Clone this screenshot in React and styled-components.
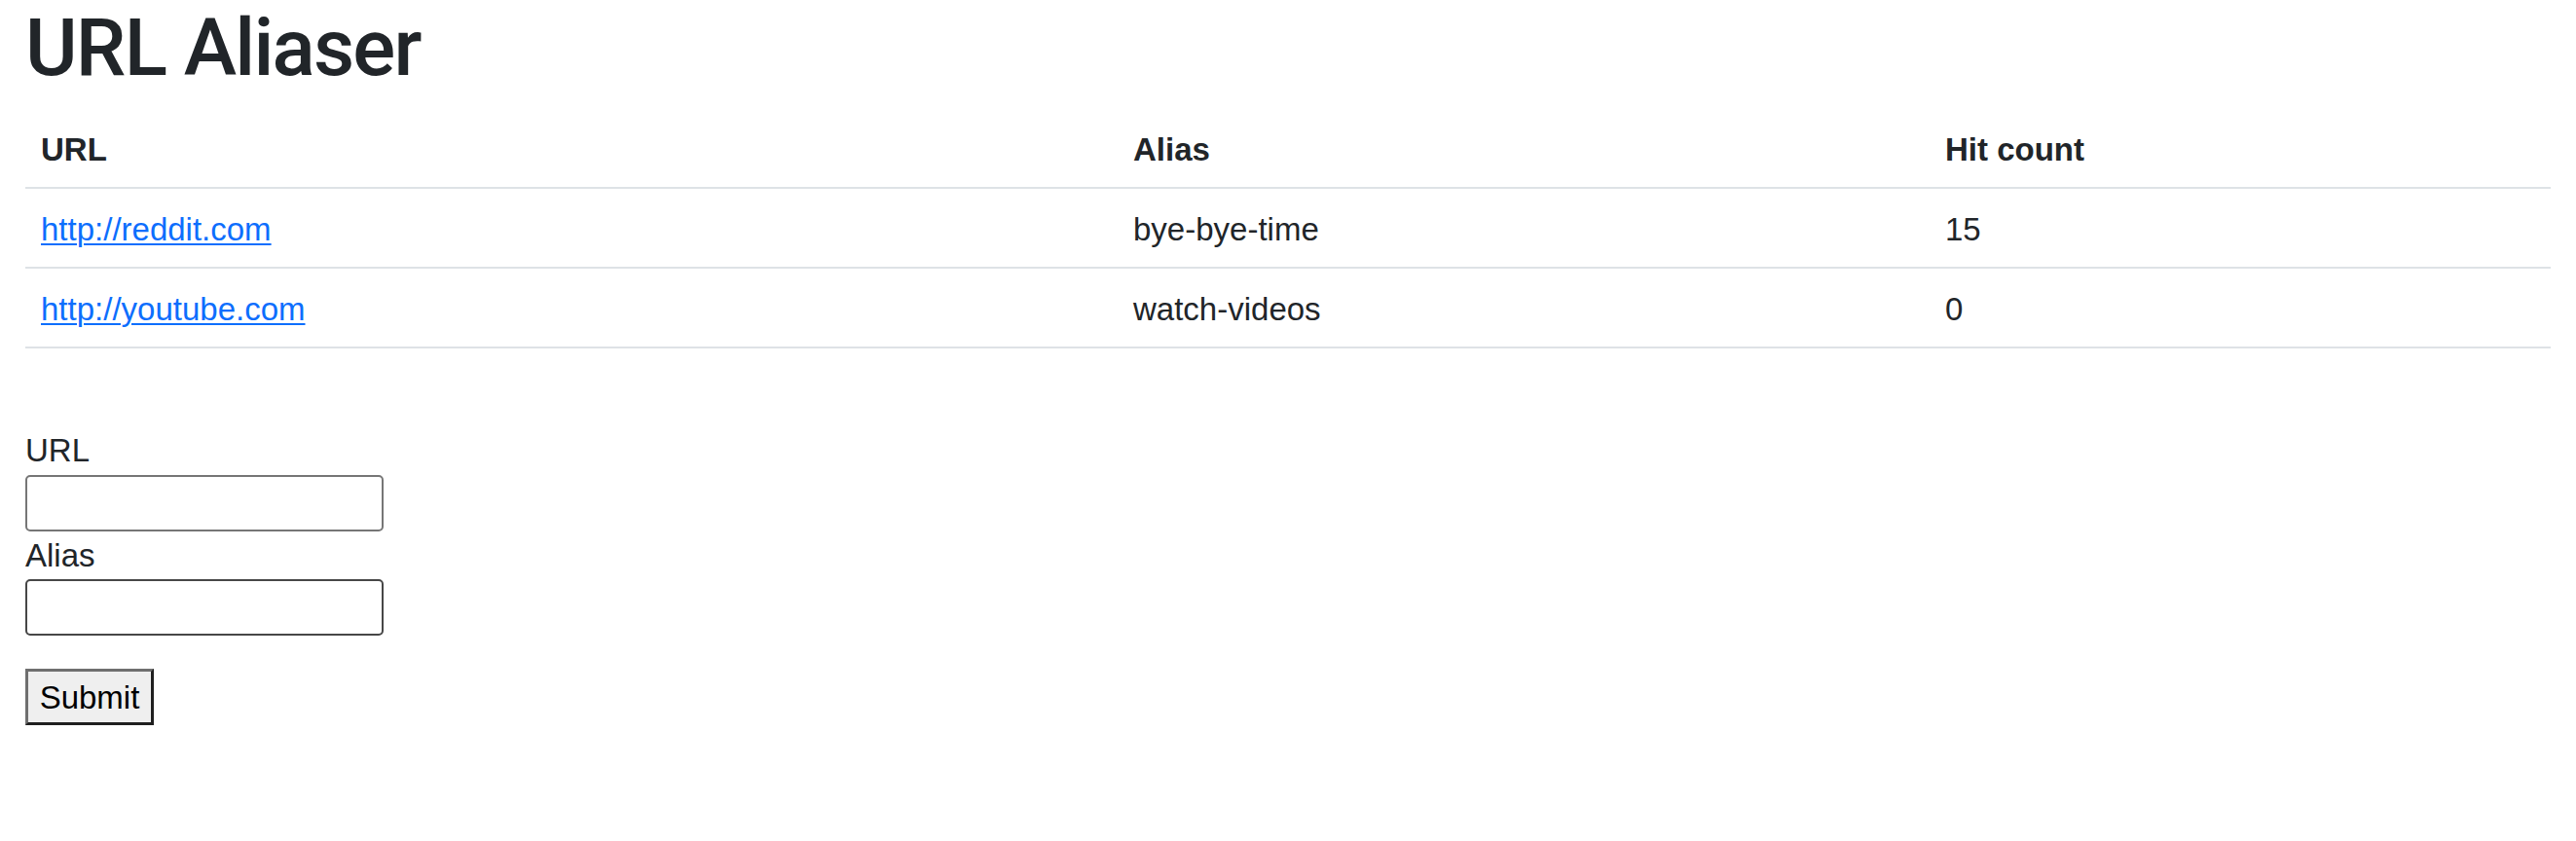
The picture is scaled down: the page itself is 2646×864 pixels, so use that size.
import React from "react";
import styled, { createGlobalStyle } from "styled-components";

const GlobalStyle = createGlobalStyle`
  html, body { margin: 0; padding: 0; background: #fff; }
  body {
    font-family: "Liberation Sans", Arial, sans-serif;
    font-size: 33px;
    line-height: 49.5px;
    color: #212529;
  }
  * { box-sizing: border-box; }
`;

const Page = styled.div`
  padding: 0 26px;
`;

const Title = styled.h1`
  margin: 0 0 14px;
  font-family: Roboto, "Liberation Sans", Arial, sans-serif;
  font-size: 82px;
  line-height: 98px;
  font-weight: 500;
  letter-spacing: -1.8px;
  color: #212529;
`;

const Table = styled.table`
  width: 100%;
  border-collapse: collapse;
  table-layout: fixed;
  margin-bottom: 80px;
`;

const Col = styled.col`
  width: ${(p) => p.$w}px;
`;

const HeadCell = styled.th`
  text-align: left;
  font-weight: 700;
  padding: 18px 16px 14px;
  line-height: 48px;
  border-bottom: 2px solid #dee2e6;
`;

const Cell = styled.td`
  padding: 18px 16px 14px;
  line-height: 48px;
  border-bottom: 2px solid #dee2e6;
`;

const Link = styled.a`
  color: #0d6efd;
  text-decoration: underline;
  text-underline-offset: 3px;
  text-decoration-thickness: 2px;
`;

const Form = styled.form`
  display: flex;
  flex-direction: column;
  align-items: flex-start;
`;

const Label = styled.label`
  display: block;
  line-height: 49.5px;
`;

const Input = styled.input`
  display: block;
  width: 368px;
  height: 58px;
  margin: 0;
  padding: 2px 6px;
  border: 2px solid ${(p) => (p.$dark ? "#474747" : "#767676")};
  border-radius: 5px;
  background: #fff;
  font-family: "Liberation Sans", Arial, sans-serif;
  font-size: 26px;
  outline: none;
`;

const SubmitButton = styled.button`
  margin-top: 34px;
  width: 132px;
  height: 58px;
  padding: 0;
  background: #efefef;
  border-style: solid;
  border-width: 3px;
  border-color: #6f6f6f #1f1f1f #1f1f1f #6f6f6f;
  border-radius: 0;
  font-family: "Liberation Sans", Arial, sans-serif;
  font-size: 33px;
  color: #000;
  line-height: 1;
`;

const rows = [
  { url: "http://reddit.com", alias: "bye-bye-time", hits: 15 },
  { url: "http://youtube.com", alias: "watch-videos", hits: 0 },
];

export default function App() {
  return (
    <>
      <GlobalStyle />
      <Page>
        <Title>URL Aliaser</Title>
        <Table>
          <colgroup>
            <Col $w={1122} />
            <Col $w={834} />
            <Col $w={638} />
          </colgroup>
          <thead>
            <tr>
              <HeadCell>URL</HeadCell>
              <HeadCell>Alias</HeadCell>
              <HeadCell>Hit count</HeadCell>
            </tr>
          </thead>
          <tbody>
            {rows.map((r) => (
              <tr key={r.alias}>
                <Cell>
                  <Link href={r.url}>{r.url}</Link>
                </Cell>
                <Cell>{r.alias}</Cell>
                <Cell>{r.hits}</Cell>
              </tr>
            ))}
          </tbody>
        </Table>
        <Form onSubmit={(e) => e.preventDefault()}>
          <Label htmlFor="url">URL</Label>
          <Input id="url" type="text" />
          <Label htmlFor="alias">Alias</Label>
          <Input id="alias" type="text" $dark />
          <SubmitButton type="submit">Submit</SubmitButton>
        </Form>
      </Page>
    </>
  );
}
